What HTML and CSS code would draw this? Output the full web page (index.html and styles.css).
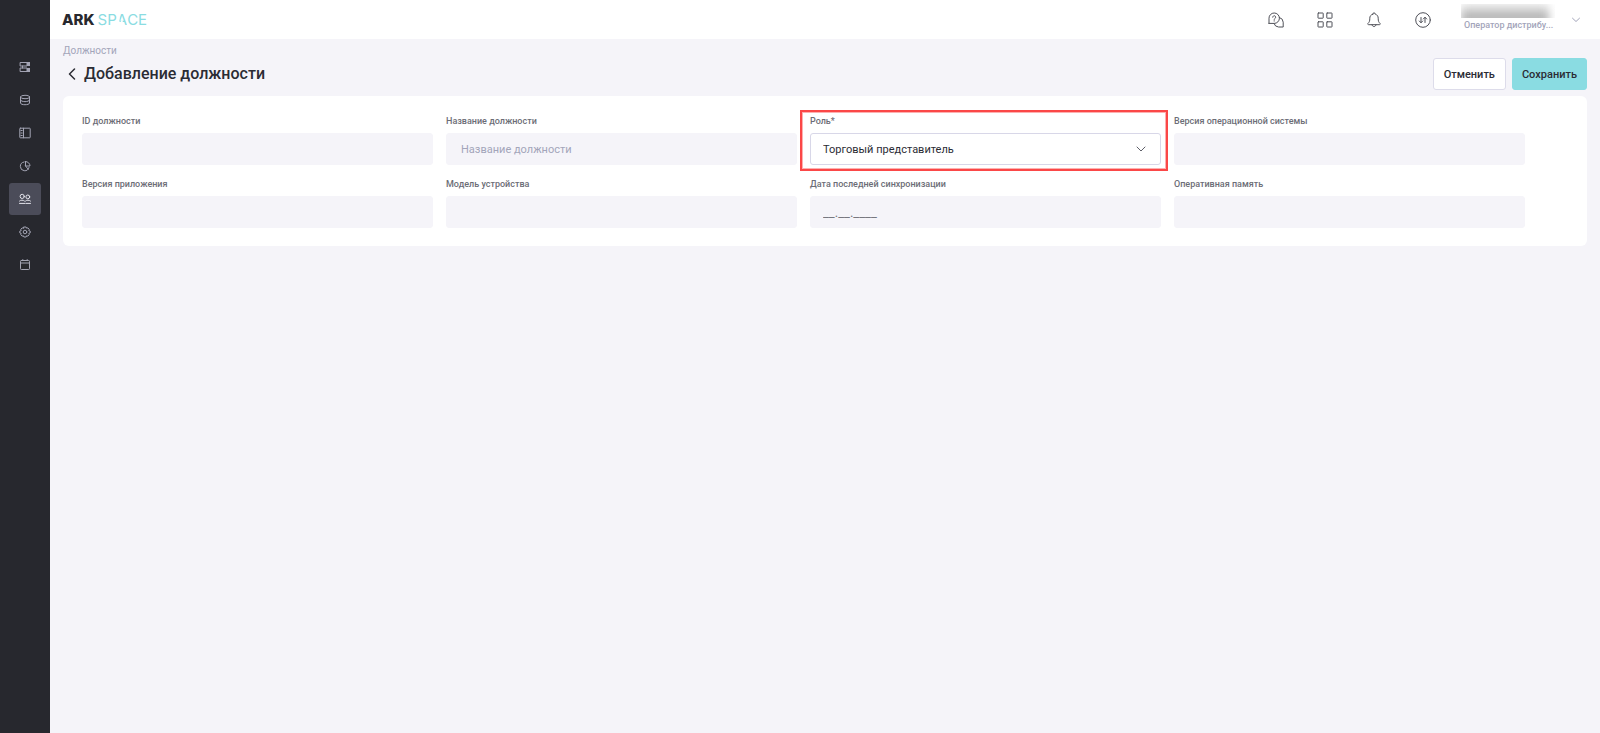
FILE: index.html
```html
<!DOCTYPE html>
<html lang="ru">
<head>
    <meta charset="UTF-8">
    <meta name="viewport" content="width=device-width, initial-scale=1.0">
    <title>Добавление должности</title>
    <link rel="stylesheet" href="styles.css">
</head>
<body>
    <nav class="sidebar">
        <a href="#" class="nav-item" aria-label="Справочники">
            <svg class="nav-icon" viewBox="0 0 12 12"><path d="M1.5 1.500h6.500V5H1.500zM1.500 7h6.500v3.500H1.500zM3.500 5v2"/><path class="nav-fill" d="M8 1h3v4H8zM8 7h3v4H8z"/></svg>
        </a>
        <a href="#" class="nav-item" aria-label="Данные">
            <svg class="nav-icon" viewBox="0 0 12 12"><ellipse cx="6" cy="3" rx="4.5" ry="1.7"/><path d="M1.500 3v6c0 2.300 9 2.300 9 0V3M1.500 6c0 2.300 9 2.300 9 0"/></svg>
        </a>
        <a href="#" class="nav-item" aria-label="Планы">
            <svg class="nav-icon" viewBox="0 0 12 12"><rect x=".8" y="1.200" width="10.400" height="9.600" rx=".5"/><path d="M4.500 1.200v9.600M2 3.500h1.200M2 6h1.200M2 8.500h1.200"/></svg>
        </a>
        <a href="#" class="nav-item" aria-label="Отчёты">
            <svg class="nav-icon" viewBox="0 0 12 12"><path d="M5 2a4.400 4.400 0 1 0 5 5.500M6.500 1.500V6H11a4.500 4.500 0 0 0-4.500-4.500zM6.500 6l2.700 3.200"/></svg>
        </a>
        <a href="#" class="nav-item active" aria-label="Сотрудники">
            <svg class="nav-icon" viewBox="0 0 12 12"><circle cx="3.200" cy="3.400" r="2.100"/><circle cx="8.800" cy="3.900" r="1.900"/><path d="M.5 8c1-1.200 3.800-1.200 5 0M6.500 8c1-1.200 3.800-1.200 5 0M.5 10.400h5.500M7 10.400h4.500"/></svg>
        </a>
        <a href="#" class="nav-item" aria-label="Настройки">
            <svg class="nav-icon" viewBox="0 0 12 12"><path d="M4.900 1h2.200l.5 1.200 1.300-.3 1.300 1.400-.4 1.300 1.400.5v1.800l-1.400.5.4 1.300-1.300 1.400-1.300-.3-.5 1.200H4.900l-.5-1.200-1.300.3-1.300-1.400.4-1.300-1.400-.5V5.100l1.400-.5-.4-1.300 1.300-1.400 1.300.3z"/><circle cx="6" cy="6" r="1.800"/></svg>
        </a>
        <a href="#" class="nav-item" aria-label="Календарь">
            <svg class="nav-icon" viewBox="0 0 12 12"><rect x="1.500" y="1.500" width="9" height="9" rx=".8"/><path d="M1.500 4h9M3.800 .6v1M8.200 .6v1"/></svg>
        </a>
    </nav>

    <div class="page">
        <header class="topbar">
            <a href="#" class="logo"><b>ARK</b><span>SP</span><span class="logo-cut">A</span><span>CE</span></a>
            <div class="topbar-actions">
                <button type="button" class="icon-btn" aria-label="Помощь">
                    <svg viewBox="0 0 16 16"><path d="M1 11V6.200a5.200 5.200 0 1 1 5.200 5.200H1z"/><path d="M11.500 5.500a5 5 0 0 1 3.700 4.700V15h-4.700a5 5 0 0 1-4.500-3.400"/><path d="M4.700 5.200c0-2 3-2 3 0 0 1.200-1.500 1-1.500 2.200M6.200 8.700v.4"/></svg>
                </button>
                <button type="button" class="icon-btn" aria-label="Приложения">
                    <svg viewBox="0 0 16 16"><rect x="1" y="1" width="5.200" height="5.200" rx=".4"/><rect x="9.800" y="1" width="5.200" height="5.200" rx=".4"/><rect x="1" y="9.800" width="5.200" height="5.200" rx=".4"/><rect x="9.800" y="9.800" width="5.200" height="5.200" rx=".4"/></svg>
                </button>
                <button type="button" class="icon-btn" aria-label="Уведомления">
                    <svg viewBox="0 0 16 16"><path d="M6.700 2.200a1.300 1.300 0 0 1 2.600 0c2 .6 2.900 2.100 2.900 4 0 3 .5 4 1.700 5 .7.700.3 1.500-.5 1.500H2.600c-.8 0-1.200-.8-.5-1.500 1.200-1 1.700-2 1.700-5 0-1.900.9-3.400 2.900-4zM6 12.700c.2 2.600 3.800 2.600 4 0"/></svg>
                </button>
                <button type="button" class="icon-btn" aria-label="Синхронизация">
                    <svg viewBox="0 0 16 16"><circle cx="8" cy="8" r="7.300"/><path d="M6 5.500v5M4.300 9L6 10.800 7.700 9M10 10.500v-5M8.300 7L10 5.200 11.700 7"/></svg>
                </button>
            </div>
            <button type="button" class="user" aria-label="Профиль">
                <span class="user-info">
                    <span class="user-name"></span>
                    <span class="user-role">Оператор дистрибу...</span>
                </span>
                <svg class="user-arrow" viewBox="0 0 8 8"><path d="M.5 2.200L4 5.500l3.500-3.300"/></svg>
            </button>
        </header>

        <main class="content">
            <a href="#" class="breadcrumb">Должности</a>
            <div class="title-row">
                <a href="#" class="back" aria-label="Назад">
                    <svg viewBox="0 0 8 12"><path d="M6.500 1L1.500 6l5 5"/></svg>
                </a>
                <h1>Добавление должности</h1>
                <button type="button" class="btn">Отменить</button>
                <button type="submit" form="position-form" class="btn btn-primary">Сохранить</button>
            </div>

            <form id="position-form" class="card">
                <div class="field">
                    <label for="position-id">ID должности</label>
                    <input type="text" id="position-id" disabled>
                </div>
                <div class="field">
                    <label for="position-name">Название должности</label>
                    <input type="text" id="position-name" placeholder="Название должности">
                </div>
                <div class="field field-marked">
                    <label for="role">Роль*</label>
                    <div class="select-wrap">
                        <select id="role">
                            <option>Торговый представитель</option>
                        </select>
                        <svg viewBox="0 0 8 8"><path d="M0 2l4 4 4-4"/></svg>
                    </div>
                </div>
                <div class="field">
                    <label for="os-version">Версия операционной системы</label>
                    <input type="text" id="os-version" disabled>
                </div>
                <div class="field">
                    <label for="app-version">Версия приложения</label>
                    <input type="text" id="app-version" disabled>
                </div>
                <div class="field">
                    <label for="device">Модель устройства</label>
                    <input type="text" id="device" disabled>
                </div>
                <div class="field">
                    <label for="sync-date">Дата последней синхронизации</label>
                    <input type="text" id="sync-date" class="date" value="__.__.____" disabled>
                </div>
                <div class="field">
                    <label for="memory">Оперативная память</label>
                    <input type="text" id="memory" disabled>
                </div>
            </form>
        </main>
    </div>
</body>
</html>
```

FILE: styles.css
```css
* {
    margin: 0;
    padding: 0;
    box-sizing: border-box;
}

body {
    display: flex;
    min-height: 100vh;
    background: #f5f4f9;
    color: #2b2c34;
    font-family: Roboto, sans-serif;
    font-size: 11px;
}

a {
    color: inherit;
    text-decoration: none;
}

button,
input,
select {
    font: inherit;
    color: inherit;
}

button {
    border: none;
    background: none;
    cursor: pointer;
}

svg {
    display: block;
    fill: none;
    stroke: currentColor;
    stroke-linecap: round;
    stroke-linejoin: round;
}

/* Sidebar */
.sidebar {
    display: flex;
    flex-direction: column;
    align-items: center;
    gap: 1px;
    width: 50px;
    padding-top: 51px;
    background: #27282e;
}

.nav-item {
    display: flex;
    align-items: center;
    justify-content: center;
    width: 32px;
    height: 32px;
    border-radius: 3px;
    color: #a3a4b4;
}

.nav-item.active {
    background: #4b4c59;
    color: #e4e4ec;
}

.nav-icon {
    width: 12px;
    height: 12px;
}

.nav-fill {
    fill: currentColor;
    stroke: none;
}

.page {
    flex: 1;
    min-width: 0;
}

/* Top bar */
.topbar {
    display: flex;
    align-items: center;
    height: 39px;
    padding: 0 20px 0 12px;
    background: #fff;
}

.logo {
    display: flex;
    font-family: Inter, sans-serif;
    font-size: 15px;
    color: #8adce2;
}

.logo b {
    font-weight: 800;
    color: #27282e;
    margin-right: 3px;
}

/* The "A" has no crossbar and only a stub of the left leg */
.logo-cut {
    clip-path: polygon(30% 0, 100% 0, 100% 100%, 70% 100%, 52% 45%, 40% 62%, 25% 62%);
}

.topbar-actions {
    display: flex;
    gap: 33px;
    margin-left: auto;
    color: #4f5058;
}

.icon-btn svg {
    width: 16px;
    height: 16px;
}

.user {
    display: flex;
    align-items: center;
    gap: 17px;
    margin-left: 30px;
    text-align: left;
    color: #a3a5ba;
}

.user-info {
    padding-bottom: 3px;
}

.user-name {
    display: block;
    height: 14px;
    overflow: hidden;
}

.user-name::before {
    content: "";
    display: block;
    width: 88px;
    height: 20px;
    background: linear-gradient(#ececec, #b0b0b0 70%);
    filter: blur(4px);
}

.user-role {
    display: block;
    width: 94px;
    padding-left: 3px;
    font-size: 9px;
    font-weight: 500;
    line-height: 14px;
    white-space: nowrap;
}

.user-arrow {
    width: 8px;
    height: 8px;
}

/* Content */
.content {
    padding: 5px 13px 13px;
}

.breadcrumb {
    display: block;
    font-size: 10px;
    line-height: 14px;
    color: #a3a5ba;
}

.title-row {
    display: flex;
    align-items: center;
    gap: 6px;
    margin-bottom: 6px;
}

.back {
    padding: 0 2px 0 5px;
}

.back svg {
    width: 8px;
    height: 12px;
    stroke-width: 1.5;
}

h1 {
    margin-right: auto;
    font-size: 16px;
    font-weight: 500;
    line-height: 20px;
}

.btn {
    height: 32px;
    padding: 0 10px;
    border: 1px solid #dddcea;
    border-radius: 3px;
    background: #fff;
    font-weight: 500;
}

.btn-primary {
    padding: 0 9px;
    border-color: #8adce2;
    background: #8adce2;
}

/* Form */
.card {
    display: grid;
    grid-template-columns: repeat(4, 1fr);
    gap: 12px 13px;
    padding: 18px 62px 18px 19px;
    border-radius: 6px;
    background: #fff;
}

.field {
    position: relative;
}

.field label {
    display: block;
    margin-bottom: 5px;
    font-size: 9px;
    font-weight: 500;
    line-height: 14px;
    color: #6c6d76;
}

.field input,
.field select {
    display: block;
    width: 100%;
    height: 32px;
    padding: 0 14px;
    border: 1px solid #f5f4f9;
    border-radius: 3px;
    background: #f5f4f9;
    outline: none;
}

.field input::placeholder {
    color: #a3a5ba;
}

.field .date {
    padding: 0 12px;
    font-size: 13px;
    color: #77787f;
}

.select-wrap {
    position: relative;
}

.field select {
    appearance: none;
    padding: 0 12px;
    border-color: #d8d7e8;
    background: #fff;
}

.select-wrap svg {
    position: absolute;
    top: 12px;
    right: 16px;
    width: 8px;
    height: 8px;
    overflow: visible;
    color: #5f6069;
    pointer-events: none;
}

/* Highlight frame around the required field */
.field-marked::after {
    content: "";
    position: absolute;
    inset: -4px -7px -6px -10px;
    border: 2px solid #fb4747;
    box-shadow: inset 0 0 0 1px #fdb0b0;
    pointer-events: none;
}
```
